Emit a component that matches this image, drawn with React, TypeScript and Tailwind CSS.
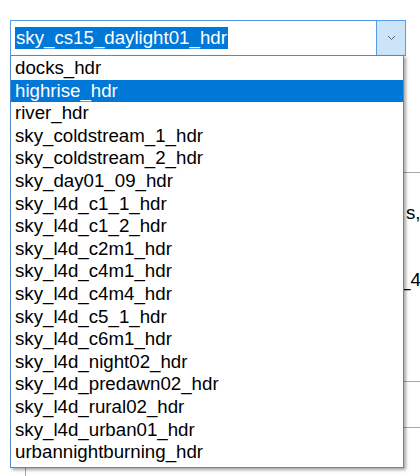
import React from 'react';

const items = [
  'docks_hdr',
  'highrise_hdr',
  'river_hdr',
  'sky_coldstream_1_hdr',
  'sky_coldstream_2_hdr',
  'sky_day01_09_hdr',
  'sky_l4d_c1_1_hdr',
  'sky_l4d_c1_2_hdr',
  'sky_l4d_c2m1_hdr',
  'sky_l4d_c4m1_hdr',
  'sky_l4d_c4m4_hdr',
  'sky_l4d_c5_1_hdr',
  'sky_l4d_c6m1_hdr',
  'sky_l4d_night02_hdr',
  'sky_l4d_predawn02_hdr',
  'sky_l4d_rural02_hdr',
  'sky_l4d_urban01_hdr',
  'urbannightburning_hdr',
];

const App: React.FC = () => {
  return (
    <div
      className="relative w-[420px] h-[476px] overflow-hidden bg-white text-black"
      style={{ fontFamily: '"Liberation Sans", Arial, sans-serif' }}
    >
      {/* combo box */}
      <div className="ml-[10px] mt-[20px] w-[396px] h-[36px] border border-[#569de5] flex">
        <div className="flex-1 flex items-center pl-[4px]">
          <span className="h-[22px] leading-[22px] text-[18.7px] bg-[#0078d7] text-white px-[1px]">
            sky_cs15_daylight01_hdr
          </span>
        </div>
        <div className="w-[29px] h-full bg-[#cce4f7] border-l border-[#569de5] flex items-center justify-center">
          <svg width="9" height="6" viewBox="0 0 9 6" fill="none">
            <path d="M1 1L4.5 4.5L8 1" stroke="#5f6670" strokeWidth="1" />
          </svg>
        </div>
      </div>

      {/* window behind the drop-down */}
      <div className="ml-[25px] -mt-[1px] h-[421px] border-l border-[#a8a8a8] flex flex-col text-[18.7px] leading-[22px]">
        <div className="h-[118px] border-b border-[#a8a8a8]" />
        <div className="h-[209px] border-b border-[#a8a8a8] flex flex-col">
          <div className="mt-[29px] pl-[380px] whitespace-nowrap">s,</div>
          <div className="mt-[45px] pl-[374px] whitespace-nowrap">_4</div>
        </div>
        <div className="h-[46px] border-b border-[#a8a8a8]" />
      </div>

      {/* drop-down list */}
      <div className="absolute left-[10px] top-[55px] w-[394px] h-[413px] bg-white border border-[#4f8bc9] shadow-[2px_2px_3px_rgba(0,0,0,0.35)] pt-[1px] text-[18.7px]">
        {items.map((name) => (
          <div
            key={name}
            className={
              name === 'highrise_hdr'
                ? 'h-[22.6px] leading-[22.6px] pl-[4px] bg-[#0078d7] text-white whitespace-nowrap'
                : 'h-[22.6px] leading-[22.6px] pl-[4px] whitespace-nowrap'
            }
          >
            {name}
          </div>
        ))}
      </div>
    </div>
  );
};

export default App;
